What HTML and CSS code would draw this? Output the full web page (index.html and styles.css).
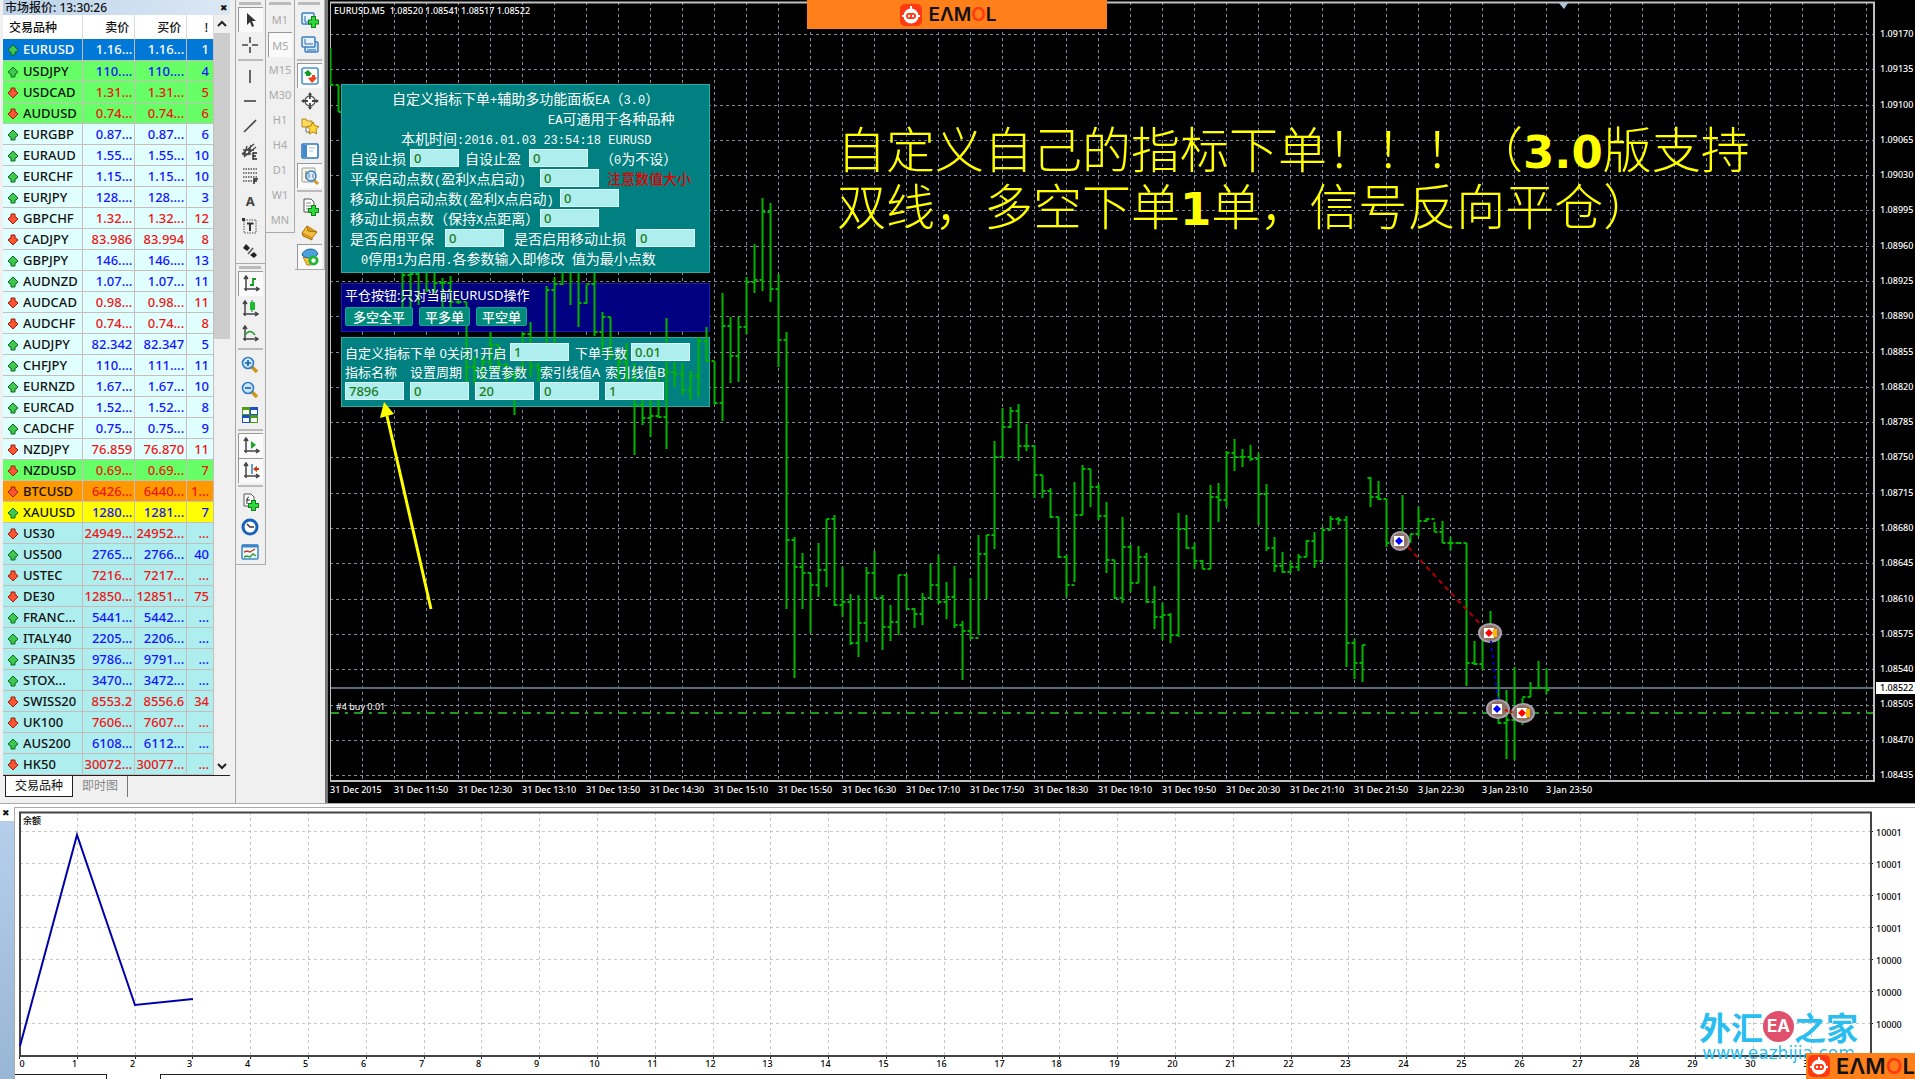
FILE: index.html
```html
<!DOCTYPE html>
<html lang="zh-CN">
<head>
    <meta charset="UTF-8">
    <meta name="viewport" content="width=device-width, initial-scale=1.0">
    <title>EURUSD.M5</title>
    <link rel="stylesheet" href="styles.css">
</head>
<body>
    <main class="workspace">
        <section class="market">
            <div class="market-title">
                <span>市场报价: 13:30:26</span>
                <button class="close-btn" aria-label="关闭">✖</button>
            </div>
            <div class="market-body">
                <table class="quotes">
                    <thead>
                        <tr><th class="sym">交易品种</th><th>卖价</th><th>买价</th><th class="spread">!</th></tr>
                    </thead>
                    <tbody id="quoteRows"></tbody>
                </table>
                <div class="scrollbar">
                    <svg width="16" height="18"><path d="M4 11l4-4 4 4" fill="none" stroke="#222" stroke-width="2"/></svg>
                    <div class="thumb"></div>
                    <svg width="16" height="18"><path d="M4 7l4 4 4-4" fill="none" stroke="#222" stroke-width="2"/></svg>
                </div>
            </div>
            <div class="market-tabs">
                <button class="tab active">交易品种</button>
                <button class="tab">即时图</button>
            </div>
        </section>

        <nav class="toolbars">
            <div class="tool-col">
                <div class="toolbar">
                    <button class="tool on" aria-label="光标"><svg viewBox="0 0 18 18"><path d="M5 2v12l3-3 2 5 2-1-2-5h4z" fill="#333"/></svg></button>
                    <button class="tool" aria-label="十字准线"><svg viewBox="0 0 18 18"><path d="M9 1v6M9 11v6M1 9h6M11 9h6" stroke="#444" stroke-width="1.6"/></svg></button>
                    <hr>
                    <button class="tool" aria-label="垂直线"><svg viewBox="0 0 18 18"><path d="M9 3v13" stroke="#444" stroke-width="1.6"/></svg></button>
                    <button class="tool" aria-label="水平线"><svg viewBox="0 0 18 18"><path d="M3 9h12" stroke="#444" stroke-width="1.6"/></svg></button>
                    <button class="tool" aria-label="趋势线"><svg viewBox="0 0 18 18"><path d="M3 15L15 3" stroke="#444" stroke-width="1.6"/></svg></button>
                    <button class="tool" aria-label="等距通道"><svg viewBox="0 0 18 18"><path d="M1 12L13 2M3 15L15 5M2 8h11M1 12h9M6 4l-3 10M10 3l-3 10" stroke="#444" stroke-width="1.3"/><path d="M16 11h-4v6h4M12 14h3" fill="none" stroke="#222" stroke-width="1.4"/></svg></button>
                    <button class="tool" aria-label="斐波纳契"><svg viewBox="0 0 18 18"><path d="M2 2h14M2 6h14M2 10h14M2 14h9" stroke="#555" stroke-width="1.4" stroke-dasharray="1.5 1"/><path d="M13 17v-5h4M13 14h3" fill="none" stroke="#222" stroke-width="1.4"/></svg></button>
                    <button class="tool letter">A</button>
                    <button class="tool" aria-label="文本标签"><svg viewBox="0 0 18 18"><path d="M3 3h12v13H3z" fill="none" stroke="#555" stroke-dasharray="1.5 1"/><path d="M6 6.500h6.500M9 6v8" stroke="#333" stroke-width="2"/><path d="M1 1h3v3H1z" fill="#333"/></svg></button>
                    <button class="tool" aria-label="箭头"><svg viewBox="0 0 18 18"><path d="M5 2l4 4-3 3-4-3zM13 10l3 3-3 3-4-3z" fill="#222"/><path d="M7 12l5-6" stroke="#555" stroke-width="1.500"/></svg></button>
                </div>
                <div class="toolbar">
                    <button class="tool on" aria-label="柱状图"><svg viewBox="0 0 18 18"><path d="M4 2v14M2 14h14M2 4l2-3 2 3M14 12l3 2-3 2" fill="none" stroke="#444" stroke-width="1.5"/><path d="M11 3v8M11 4h3M8 10h3" stroke="#129b22" stroke-width="1.800"/></svg></button>
                    <button class="tool" aria-label="阴阳烛"><svg viewBox="0 0 18 18"><path d="M4 2v14M2 14h14M2 4l2-3 2 3M14 12l3 2-3 2" fill="none" stroke="#444" stroke-width="1.5"/><path d="M11 0v12" stroke="#074"/><rect x="9" y="2" width="5" height="8" rx="1" fill="#1cba30"/></svg></button>
                    <button class="tool" aria-label="折线图"><svg viewBox="0 0 18 18"><path d="M4 2v14M2 14h14M2 4l2-3 2 3M14 12l3 2-3 2" fill="none" stroke="#444" stroke-width="1.5"/><path d="M4 10q5-7 10 0" fill="none" stroke="#239b32" stroke-width="1.6"/></svg></button>
                    <hr>
                    <button class="tool" aria-label="放大"><svg viewBox="0 0 18 18"><path d="M11 11l5 5" stroke="#c9971e" stroke-width="3.5"/><circle cx="7" cy="7" r="5.500" fill="#cbe8fb" stroke="#2f7cc4" stroke-width="1.6"/><path d="M4 7h6M7 4v6" stroke="#1b5ea6" stroke-width="1.6"/></svg></button>
                    <button class="tool" aria-label="缩小"><svg viewBox="0 0 18 18"><path d="M11 11l5 5" stroke="#c9971e" stroke-width="3.5"/><circle cx="7" cy="7" r="5.500" fill="#cbe8fb" stroke="#2f7cc4" stroke-width="1.6"/><path d="M4 7h6" stroke="#1b5ea6" stroke-width="1.6"/></svg></button>
                    <button class="tool" aria-label="平铺窗口"><svg viewBox="0 0 18 18"><path d="M1 1h8v8H1zM9 9h8v8H9z" fill="#4d9c14"/><path d="M9 1h8v8H9zM1 9h8v8H1z" fill="#1c4fc0"/><path d="M2 4h6v4H2zM10 4h6v4h-6zM2 12h6v4H2zM10 12h6v4h-6z" fill="#f4faff"/></svg></button>
                    <hr>
                    <button class="tool on" aria-label="自动滚动"><svg viewBox="0 0 18 18"><path d="M4 2v14M2 14h14M2 4l2-3 2 3M14 12l3 2-3 2" fill="none" stroke="#444" stroke-width="1.5"/><path d="M9 4v8l5-4z" fill="#18a52b"/></svg></button>
                    <button class="tool on" aria-label="图表平移"><svg viewBox="0 0 18 18"><path d="M4 2v14M2 14h14M2 4l2-3 2 3M14 12l3 2-3 2" fill="none" stroke="#444" stroke-width="1.5"/><path d="M10 2v10" stroke="#2880c0" stroke-width="1.500"/><path d="M11 7l4-3v2h2v2h-2v2z" fill="#cf3415"/></svg></button>
                    <hr>
                    <button class="tool" aria-label="技术指标"><svg viewBox="0 0 18 18"><path d="M3 1h7l3 3v9H3z" fill="#fff" stroke="#555"/><path d="M8 4q-2 0-2 3v4M5 7h4" fill="none" stroke="#333"/><path d="M12.500 7v11M7 12.500h11" stroke="#13801c" stroke-width="5"/><path d="M12.500 8v9M8 12.500h9" stroke="#2cd83a" stroke-width="3"/></svg></button>
                    <button class="tool" aria-label="时段"><svg viewBox="0 0 18 18"><circle cx="9" cy="9" r="7" fill="#fff" stroke="#1763b8" stroke-width="3"/><path d="M6 6l3 3h4" fill="none" stroke="#333" stroke-width="1.4"/></svg></button>
                    <button class="tool" aria-label="模板"><svg viewBox="0 0 18 18"><rect x="1" y="2" width="16" height="14" rx="1" fill="#eef8ff" stroke="#3c86c8" stroke-width="1.5"/><path d="M1 3h16" stroke="#3c86c8" stroke-width="3"/><path d="M3 9l3-1 3 1 5-3" fill="none" stroke="#c8401e" stroke-width="1.4"/><path d="M3 14l3-1 3 1 3-3 3 2" fill="none" stroke="#2d9a35" stroke-width="1.400"/></svg></button>
                </div>
            </div>
            <div class="tool-col">
                <div class="toolbar periods">
                    <button class="tool">M1</button>
                    <button class="tool on">M5</button>
                    <button class="tool">M15</button>
                    <button class="tool">M30</button>
                    <button class="tool">H1</button>
                    <button class="tool">H4</button>
                    <button class="tool">D1</button>
                    <button class="tool">W1</button>
                    <button class="tool">MN</button>
                </div>
            </div>
            <div class="tool-col">
                <div class="toolbar">
                    <button class="tool" aria-label="新图表"><svg viewBox="0 0 18 18"><rect x="1" y="2" width="12" height="11" rx="1" fill="#e6f3ff" stroke="#3c7fc0" stroke-width="1.5"/><path d="M4 5v6h7" fill="none" stroke="#2a69a8"/><path d="M12.500 5v12M7 11h11" stroke="#13801c" stroke-width="5"/><path d="M12.500 6v10M8 11h9" stroke="#2cd83a" stroke-width="3"/></svg></button>
                    <button class="tool" aria-label="窗口"><svg viewBox="0 0 18 18"><rect x="4" y="6" width="13" height="10" rx="1" fill="#cfe6fa" stroke="#3c7fc0" stroke-width="1.5"/><rect x="1" y="1" width="13" height="10" rx="1" fill="#e6f3ff" stroke="#3c7fc0" stroke-width="1.5"/><path d="M4 3v5h8M6 14h9" fill="none" stroke="#2a69a8"/></svg></button>
                    <hr>
                    <button class="tool on" aria-label="市场报价"><svg viewBox="0 0 18 18"><rect x="1" y="1" width="16" height="16" rx="2" fill="#fff" stroke="#4b92d2" stroke-width="1.600"/><path d="M7 3l4 4-2 1v1H5V7L3 6z" fill="#119b20"/><path d="M11 16l5-5-2-1V8h-3v2l-4 1z" fill="#f0451c"/></svg></button>
                    <button class="tool" aria-label="数据窗口"><svg viewBox="0 0 18 18"><circle cx="9" cy="9" r="5" fill="#fff" stroke="#555" stroke-width="1.4"/><path d="M9 1v6M9 11v6M1 9h6M11 9h6" stroke="#444" stroke-width="1.8"/><path d="M7 3l2-3 2 3zM7 15l2 3 2-3zM3 7L0 9l3 2zM15 7l3 2-3 2z" fill="#444"/></svg></button>
                    <button class="tool" aria-label="导航"><svg viewBox="0 0 18 18"><path d="M1 2h4l1 2h5v6H1z" fill="#fbdc5c" stroke="#b8891a"/><path d="M5 10v5h4" fill="none" stroke="#777"/><path d="M12 5l2 4 4 .5-3 3 .7 4.500-3.700-2-4 2 1-4.500-3-3 4-.5z" fill="#ffd93b" stroke="#b07f10"/></svg></button>
                    <button class="tool" aria-label="终端"><svg viewBox="0 0 18 18"><rect x="1" y="2" width="16" height="14" rx="1" fill="#fff" stroke="#2f78c2" stroke-width="1.600"/><path d="M2 3h4v12H2z" fill="#3f88ce"/><path d="M8 6h6M8 9h4" stroke="#9cc3e5"/></svg></button>
                    <button class="tool on" aria-label="策略测试"><svg viewBox="0 0 18 18"><rect x="1" y="1" width="13" height="14" rx="1" fill="#fff3d8" stroke="#8a9fb0"/><path d="M13 13l4 4" stroke="#d39a20" stroke-width="3"/><circle cx="10" cy="9" r="5" fill="#d5ecfb" stroke="#3a80be" stroke-width="1.5"/><path d="M8 6v5M12 7v4M5 4v8" stroke="#5b7f9c"/></svg></button>
                    <hr>
                    <button class="tool" aria-label="新订单"><svg viewBox="0 0 18 18"><path d="M3 1h7l3 3v10H3z" fill="#fff" stroke="#555"/><path d="M5 5h5M5 8h5M5 11h3" stroke="#888"/><path d="M12.500 7v11M7 12.500h11" stroke="#13801c" stroke-width="5"/><path d="M12.500 8v9M8 12.500h9" stroke="#2cd83a" stroke-width="3"/></svg></button>
                    <button class="tool" aria-label="编辑器"><svg viewBox="0 0 18 18"><path d="M6 3l10 6-5 6-10-5z" fill="#f3bd3e" stroke="#a9710c"/><path d="M6 3l1 5 9 1M1 10l1 3 9 4v-2" fill="#dd9c1c" stroke="#a9710c"/></svg></button>
                    <button class="tool on" aria-label="自动交易"><svg viewBox="0 0 18 18"><path d="M2 9h12l-4 8H6z" fill="#f2c63a" stroke="#b3861a"/><path d="M1 7q1-5 8-6 6 0 8 5-2 4-8 4-6 0-8-3z" fill="#4ba1dc" stroke="#2468a6"/><circle cx="12.500" cy="12.500" r="5" fill="#1fb432"/><circle cx="12.500" cy="12.500" r="2.200" fill="#fff"/></svg></button>
                </div>
            </div>
        </nav>

        <section class="chart">
            <div class="chart-main">
                <div class="plot" id="plot">
                    <svg class="layer" id="gridLayer"></svg>

                    <div class="panels">
                        <form class="panel panel-main">
                            <div class="row text title">自定义指标下单<span class="mono">+</span>辅助多功能面板<span class="mono">EA</span>（<span class="mono">3.0</span>）</div>
                            <div class="row text note"><span class="mono">EA</span>可通用于各种品种</div>
                            <div class="row text clock">本机时间<span class="mono">:2016.01.03 23:54:18 EURUSD</span></div>
                            <div class="row">
                                <label class="w60" for="sl">自设止损</label><input class="short" id="sl" value="0">
                                <label class="w64 indent" for="tp">自设止盈</label><input id="tp" value="0">
                                <span class="hint">（<span class="mono">0</span>为不设）</span>
                            </div>
                            <div class="row">
                                <label class="w190" for="be">平保启动点数<span class="mono">(</span>盈利<span class="mono">X</span>点启动<span class="mono">)</span></label><input id="be" value="0">
                                <span class="warn">注意数值大小</span>
                            </div>
                            <div class="row">
                                <label class="w210" for="tsStart">移动止损启动点数<span class="mono">(</span>盈利<span class="mono">X</span>点启动<span class="mono">)</span></label><input id="tsStart" value="0">
                            </div>
                            <div class="row">
                                <label class="w190" for="ts">移动止损点数（保持<span class="mono">X</span>点距离）</label><input id="ts" value="0">
                            </div>
                            <div class="row">
                                <label class="w95" for="beOn">是否启用平保</label><input id="beOn" value="0">
                                <label class="w120 indent-lg" for="tsOn">是否启用移动止损</label><input id="tsOn" value="0">
                            </div>
                            <div class="row text foot"><span class="mono">0</span>停用<span class="mono">1</span>为启用<span class="mono">.</span>各参数输入即修改<span class="mono"> </span>值为最小点数</div>
                        </form>

                        <div class="panel panel-close">
                            <div class="row above">平仓按钮:只对当前EURUSD操作</div>
                            <div class="btns above">
                                <button>多空全平</button>
                                <button>平多单</button>
                                <button>平空单</button>
                            </div>
                        </div>

                        <form class="panel panel-order">
                            <div class="row above">
                                <label class="w165" for="on">自定义指标下单 0关闭1开启</label><input id="on" value="1">
                                <label class="w56 indent" for="lots">下单手数</label><input id="lots" value="0.01">
                            </div>
                            <div class="fields above">
                                <label>指标名称<input value="7896"></label>
                                <label>设置周期<input value="0"></label>
                                <label>设置参数<input value="20"></label>
                                <label>索引线值A<input value="0"></label>
                                <label>索引线值B<input value="1"></label>
                            </div>
                        </form>
                    </div>

                    <svg class="layer bars" id="barLayer"></svg>

                    <div class="symbol-info">EURUSD.M5&nbsp; 1.08520 1.08541 1.08517 1.08522</div>
                    <h1 class="headline">自定义自己的指标下单！！！（<b>3.0</b>版支持<br>双线，多空下单<b>1</b>单，信号反向平仓）</h1>
                    <div class="order-tag">#4 buy 0.01</div>
                </div>
                <div class="prices" id="prices">
                    <span class="price-now">1.08522</span>
                </div>
            </div>
            <div class="times" id="times"></div>
        </section>
    </main>

    <section class="report">
        <div class="report-side"><button class="close-btn" aria-label="关闭">✖</button></div>
        <div class="report-main">
            <svg class="balance" id="balance"></svg>
            <div class="report-tabs"><i></i><i></i><i></i></div>
        </div>
        <div class="watermark">
            <div class="wm-name">外汇<span class="wm-ea">EA</span>之家</div>
            <div class="wm-url">www.eazhijia.com</div>
        </div>
    </section>

    <div class="banner banner-top">
        <svg class="robot" viewBox="0 0 22 22"><rect width="22" height="22" rx="5" fill="#ff3a12"/><path d="M11 2v4M2 12h3M17 12h3" stroke="#fff" stroke-width="2"/><circle cx="11" cy="12" r="7.500" fill="#fff"/><rect x="6" y="9" width="10" height="6" rx="3" fill="#ff3a12"/><circle cx="9" cy="12" r="1.200" fill="#fff"/><circle cx="13" cy="12" r="1.200" fill="#fff"/></svg>
        <span>EΛM<em>O</em>L</span>
    </div>
    <div class="banner banner-corner">
        <svg class="robot" viewBox="0 0 22 22"><rect width="22" height="22" rx="5" fill="#ff3a12"/><path d="M11 2v4M2 12h3M17 12h3" stroke="#fff" stroke-width="2"/><circle cx="11" cy="12" r="7.500" fill="#fff"/><rect x="6" y="9" width="10" height="6" rx="3" fill="#ff3a12"/><circle cx="9" cy="12" r="1.200" fill="#fff"/><circle cx="13" cy="12" r="1.200" fill="#fff"/></svg>
        <span>EΛM<em>O</em>L</span>
    </div>

    <script src="script.js"></script>
</body>
</html>
```

FILE: styles.css
```css
* {
    box-sizing: border-box;
    margin: 0;
    padding: 0;
}

body {
    height: 100vh;
    display: flex;
    flex-direction: column;
    overflow: hidden;
    background: #f0f0f0;
    color: #111;
    font-family: "Noto Sans", "Noto Sans CJK SC", sans-serif;
    font-size: 13px;
}

button, input {
    font: inherit;
    color: inherit;
    border: none;
    background: none;
}

.workspace {
    flex: 1;
    min-height: 0;
    display: flex;
}

/* Market watch */
.market {
    width: 236px;
    padding-left: 3px;
    padding-right: 5px;
    border-right: 1px solid #aaa;
    display: flex;
    flex-direction: column;
}

.market-title {
    height: 15px;
    display: flex;
    justify-content: space-between;
    align-items: center;
    padding: 0 2px;
    line-height: 14px;
    font-size: 12px;
    font-weight: 500;
    background: linear-gradient(90deg, #bcd3ea, #dce8f4);
}

.close-btn {
    font-size: 9px;
    line-height: 12px;
}

.market-body {
    display: flex;
    border-bottom: 1px solid #222;
}

.quotes {
    flex: 1;
    border-collapse: collapse;
    table-layout: fixed;
    background: #fff;
    font-weight: 500;
}

.quotes th {
    height: 24px;
    font-weight: 500;
    font-size: 12px;
    text-align: right;
    padding-right: 5px;
    width: 52px;
    border-right: 1px solid #ddd;
}

.quotes th.sym {
    width: 80px;
    text-align: left;
    padding-left: 6px;
}

.quotes th.spread {
    width: 27px;
}

.quotes td {
    height: 21px;
    line-height: 20px;
    padding-right: 2px;
    text-align: right;
    white-space: nowrap;
    overflow: hidden;
    border-right: 1px solid #c9bcbc;
    border-bottom: 1px solid #c9bcbc;
}

.quotes td.sym {
    text-align: left;
    padding-left: 4px;
    color: #111;
}

.quotes td svg {
    width: 12px;
    height: 12px;
    margin-right: 4px;
    vertical-align: -2px;
}

.quotes td:last-child {
    padding-right: 4px;
}

.pale { background: #e0ffff; }
.aqua { background: #afeeee; }
.green { background: #66ff66; }
.orange { background: #ff9900; }
.yellow { background: #ffff00; }
.selected { background: #0078d7; }

.up td { color: #1414ff; }
.down td { color: #f01414; }
.quotes .selected td { color: #fff; }

.scrollbar {
    width: 16px;
    display: flex;
    flex-direction: column;
    background: #f0f0f0;
}

.scrollbar svg:last-child {
    margin-top: auto;
}

.thumb {
    height: 306px;
    background: #cdcdcd;
}

.market-tabs {
    display: flex;
    font-size: 12px;
    padding-left: 2px;
}

.tab {
    height: 21px;
    padding: 0 9px;
    line-height: 20px;
    color: #888;
    border-right: 1px solid #777;
}

.tab.active {
    color: #111;
    background: #fff;
    border: 1px solid #222;
    border-top: none;
}

/* Toolbars */
.toolbars {
    display: flex;
    width: 89px;
}

.tool-col {
    flex: 1;
}

.toolbar {
    padding: 7px 2px 0;
    border-right: 1px solid #aaa;
    border-bottom: 1px solid #aaa;
    background: linear-gradient(#bbb, #bbb) 3px 2px / 22px 3px no-repeat #f0f0f0;
}

.toolbar hr {
    border: none;
    border-top: 2px solid #bbb;
    margin: 2px 0;
}

.tool {
    display: flex;
    width: 100%;
    height: 25px;
    align-items: center;
    justify-content: center;
}

.tool svg {
    width: 18px;
    height: 18px;
}

.tool.on {
    background: #fafafa;
    border-left: 1px solid #999;
    border-top: 1px solid #999;
}

.letter {
    font-weight: bold;
    color: #444;
}

.periods .tool {
    font-size: 11px;
    color: #aaa;
}

/* Price chart */
.chart {
    flex: 1;
    min-width: 0;
    display: flex;
    flex-direction: column;
    background: #000;
    color: #fff;
    border-left: 3px solid #777;
    padding-left: 2px;
}

.chart-main {
    flex: 1;
    display: flex;
    min-height: 0;
}

.plot {
    flex: 1;
    position: relative;
    overflow: hidden;
}

.layer {
    position: absolute;
    left: 0;
    top: 0;
    width: 100%;
    height: 100%;
}

.bars {
    z-index: 1;
    pointer-events: none;
}

.symbol-info {
    position: absolute;
    left: 4px;
    top: 4px;
    font-size: 9px;
    font-weight: 500;
    line-height: 13px;
}

.order-tag {
    position: absolute;
    left: 6px;
    top: 701px;
    font-size: 9px;
    line-height: 12px;
}

.headline {
    position: absolute;
    left: 507px;
    top: 118px;
    color: #ffff00;
    font-family: "Noto Sans CJK SC", sans-serif;
    font-size: 49px;
    font-weight: 300;
    line-height: 57px;
    white-space: nowrap;
}

.headline b {
    font-family: "DejaVu Sans", sans-serif;
    font-size: 45px;
    font-weight: bold;
    line-height: 1;
}

.prices {
    position: relative;
    width: 40px;
    padding: 28px 0 1px 5px;
    display: flex;
    flex-direction: column;
    justify-content: space-between;
    font-size: 9px;
    font-weight: 500;
    line-height: 12px;
}

.price-now {
    position: absolute;
    left: 1px;
    right: 0;
    top: 682px;
    padding-left: 4px;
    background: #fff;
    color: #000;
}

.times {
    height: 21px;
    display: flex;
    font-size: 9px;
    font-weight: 500;
    line-height: 16px;
    overflow: hidden;
}

.times span {
    flex: 0 0 64px;
    white-space: nowrap;
}

/* Expert advisor panels, laid over the chart */
.panels {
    position: absolute;
    left: 11px;
    top: 84px;
    width: 369px;
    display: flex;
    flex-direction: column;
}

.panel {
    padding-left: 3px;
    border: 1px solid #20b2aa;
    background: #008080;
}

.panel-main {
    position: relative;
    z-index: 2;
    height: 189px;
    padding: 3px 0 0 8px;
    margin-bottom: 10px;
    font-family: "Noto Sans CJK SC", sans-serif;
}

.panel-close {
    height: 49px;
    margin-bottom: 5px;
    background: #000080;
    border-color: #1c1cb4;
}

.panel-order {
    height: 70px;
    padding-top: 4px;
}

.above {
    position: relative;
    z-index: 2;
}

.row {
    display: flex;
    height: 20px;
    align-items: center;
    white-space: nowrap;
}

.panel-main .row {
    font-size: 14px;
}

.panel-main .text {
    display: block;
    line-height: 20px;
}

.mono {
    font-family: "Liberation Mono", monospace;
    font-size: 12px;
    white-space: pre;
}

.title { padding-left: 42px; }
.note { padding-left: 198px; }
.clock { padding-left: 51px; }
.foot { padding-left: 11px; }
.hint { padding-left: 12px; }

.warn {
    padding-left: 8px;
    color: #e00000;
    font-weight: 500;
}

.panel input {
    width: 59px;
    height: 18px;
    padding-left: 3px;
    background: #afeeee;
    border: 1px solid #e0ffff;
    color: #1a7a1a;
    font-family: "Noto Sans", sans-serif;
    font-size: 13px;
    font-weight: 500;
    line-height: 16px;
}

.panel .short { width: 49px; }

.indent { margin-left: 6px; }
.indent-lg { margin-left: 10px; }
.w56 { width: 56px; }
.w60 { width: 60px; }
.w64 { width: 64px; }
.w95 { width: 95px; }
.w120 { width: 122px; }
.w165 { width: 165px; }
.w190 { width: 190px; }
.w210 { width: 210px; }

.btns {
    display: flex;
    gap: 6px;
    margin-top: 3px;
}

.btns button {
    height: 19px;
    padding: 0 5px;
    background: #008b7a;
    border: 1px solid #14a39a;
    border-radius: 2px;
    font-size: 13px;
    font-weight: 500;
    line-height: 16px;
}

.btns button:first-child {
    padding: 0 7px;
}

.fields {
    display: flex;
    gap: 6px;
}

.fields label {
    width: 59px;
    line-height: 20px;
    white-space: nowrap;
}

.fields input {
    display: block;
}

/* Tester report */
.report {
    position: relative;
    height: 276px;
    display: flex;
    padding-top: 3px;
    background: #fff;
    border-top: 1px solid #aaa;
}

.report-side {
    width: 14px;
    background: linear-gradient(#b5cfeb, #98b4d4) 0 14px no-repeat;
}

.report-side .close-btn {
    display: block;
    padding-left: 2px;
}

.report-main {
    flex: 1;
    border: 1px solid #aaa;
    border-right: none;
    border-bottom: none;
    display: flex;
    flex-direction: column;
}

.balance {
    flex: 1;
    width: 100%;
    min-height: 0;
    font-size: 9px;
    font-weight: 500;
}

.report-tabs {
    height: 5px;
    display: flex;
}

.report-tabs i {
    width: 92px;
    border-top: 1px solid #222;
    border-right: 1px solid #222;
}

.report-tabs i:nth-child(2) {
    width: 54px;
    border-top: none;
}

.report-tabs i:last-child {
    flex: 1;
}

.watermark {
    position: absolute;
    right: 57px;
    bottom: 16px;
    color: #2abdf0;
    text-align: center;
}

.wm-name {
    display: flex;
    align-items: center;
    justify-content: center;
    font-family: "Noto Sans CJK SC", sans-serif;
    font-size: 32px;
    font-weight: bold;
    line-height: 34px;
}

.wm-ea {
    width: 31px;
    height: 31px;
    border-radius: 50%;
    background: #e0506c;
    color: #fff;
    font-family: Inter, sans-serif;
    font-size: 17px;
    line-height: 31px;
}

.wm-url {
    font-family: "DejaVu Sans", sans-serif;
    font-size: 17px;
    line-height: 20px;
}

/* Brand banners */
.banner {
    position: absolute;
    z-index: 5;
    display: flex;
    align-items: center;
    justify-content: center;
    gap: 6px;
    background: #ff7f1a;
    color: #111;
    font-family: Inter, sans-serif;
    font-weight: 600;
    white-space: nowrap;
}

.banner em {
    color: #ff3a12;
    font-style: normal;
}

.robot {
    width: 22px;
    height: 22px;
}

.banner-top {
    left: 807px;
    top: 0;
    width: 300px;
    height: 29px;
    padding-right: 17px;
    font-size: 19px;
}

.banner-corner {
    right: 0;
    bottom: 0;
    height: 26px;
    padding-left: 2px;
    font-size: 22px;
}
```

FILE: script.js
```js
// symbol, bid, ask, spread, direction, row colour
const quotes = [
    ['EURUSD', '1.16...', '1.16...', '1', 'up', 'selected'],
    ['USDJPY', '110....', '110....', '4', 'up', 'green'],
    ['USDCAD', '1.31...', '1.31...', '5', 'down', 'green'],
    ['AUDUSD', '0.74...', '0.74...', '6', 'down', 'green'],
    ['EURGBP', '0.87...', '0.87...', '6', 'up', 'pale'],
    ['EURAUD', '1.55...', '1.55...', '10', 'up', 'pale'],
    ['EURCHF', '1.15...', '1.15...', '10', 'up', 'pale'],
    ['EURJPY', '128....', '128....', '3', 'up', 'pale'],
    ['GBPCHF', '1.32...', '1.32...', '12', 'down', 'pale'],
    ['CADJPY', '83.986', '83.994', '8', 'down', 'pale'],
    ['GBPJPY', '146....', '146....', '13', 'up', 'pale'],
    ['AUDNZD', '1.07...', '1.07...', '11', 'up', 'pale'],
    ['AUDCAD', '0.98...', '0.98...', '11', 'down', 'pale'],
    ['AUDCHF', '0.74...', '0.74...', '8', 'down', 'pale'],
    ['AUDJPY', '82.342', '82.347', '5', 'up', 'pale'],
    ['CHFJPY', '110....', '111....', '11', 'up', 'pale'],
    ['EURNZD', '1.67...', '1.67...', '10', 'up', 'pale'],
    ['EURCAD', '1.52...', '1.52...', '8', 'up', 'pale'],
    ['CADCHF', '0.75...', '0.75...', '9', 'up', 'pale'],
    ['NZDJPY', '76.859', '76.870', '11', 'down', 'pale'],
    ['NZDUSD', '0.69...', '0.69...', '7', 'down', 'green'],
    ['BTCUSD', '6426...', '6440...', '1...', 'down', 'orange'],
    ['XAUUSD', '1280...', '1281...', '7', 'up', 'yellow'],
    ['US30', '24949...', '24952...', '...', 'down', 'aqua'],
    ['US500', '2765...', '2766...', '40', 'up', 'aqua'],
    ['USTEC', '7216...', '7217...', '...', 'down', 'aqua'],
    ['DE30', '12850...', '12851...', '75', 'down', 'aqua'],
    ['FRANC...', '5441...', '5442...', '...', 'up', 'aqua'],
    ['ITALY40', '2205...', '2206...', '...', 'up', 'aqua'],
    ['SPAIN35', '9786...', '9791...', '...', 'up', 'aqua'],
    ['STOX...', '3470...', '3472...', '...', 'up', 'aqua'],
    ['SWISS20', '8553.2', '8556.6', '34', 'down', 'aqua'],
    ['UK100', '7606...', '7607...', '...', 'down', 'aqua'],
    ['AUS200', '6108...', '6112...', '...', 'up', 'aqua'],
    ['HK50', '30072...', '30077...', '...', 'down', 'aqua']
];

const arrows = {
    up: '<svg viewBox="0 0 12 12"><path d="M6 1l5 5-2 2H8v3H4V8H3L1 6z" fill="#3fc850" stroke="#0b6b18"/></svg>',
    down: '<svg viewBox="0 0 12 12"><path d="M6 11L1 6l2-2h1V1h4v3h1l2 2z" fill="#ff5533" stroke="#9c1c08"/></svg>'
};

document.getElementById('quoteRows').innerHTML = quotes.map(([sym, bid, ask, spread, dir, color]) =>
    `<tr class="${dir} ${color}"><td class="sym">${arrows[dir]}${sym}</td><td>${bid}</td><td>${ask}</td><td>${spread}</td></tr>`
).join('');

// Each bar is [high, low, close]; a bar opens at the previous close
const BAR_STEP = 8;
const segments = [
    { start: 0, open: 50, bars: [[48, 86, 85], [85, 112, 112]] },
    { start: 9, open: 270, bars: [
        [240, 307, 275], [255, 307, 274], [262, 305, 269], [255, 292, 290], [266, 293, 283], [278, 307, 283],
        [276, 307, 302], [300, 304, 302], [302, 387, 367], [357, 385, 370], [355, 380, 362], [332, 372, 345],
        [345, 372, 365], [363, 383, 375], [371, 415, 372], [332, 373, 334], [322, 377, 366], [363, 382, 370],
        [286, 354, 290], [277, 343, 284], [240, 285, 272], [245, 305, 272], [272, 327, 303], [285, 304, 284],
        [269, 336, 332], [312, 353, 317], [317, 360, 355], [355, 380, 362], [343, 383, 378], [363, 455, 405],
        [385, 425, 418], [364, 437, 416], [370, 418, 417], [318, 449, 372], [362, 387, 374], [363, 395, 390],
        [371, 400, 376], [337, 397, 341], [327, 362, 361],
        [361, 405, 403], [293, 421, 326], [317, 383, 356], [317, 382, 327], [277, 334, 282], [244, 293, 280],
        [198, 291, 212], [203, 302, 289], [274, 367, 340], [332, 609, 540], [537, 678, 567], [553, 609, 573],
        [573, 633, 585], [543, 597, 570], [519, 587, 519], [515, 606, 605], [567, 617, 602], [594, 645, 643],
        [595, 657, 623], [567, 642, 573], [551, 599, 598], [595, 650, 627], [605, 641, 622], [575, 635, 575],
        [574, 609, 609], [608, 628, 614], [593, 625, 598], [564, 599, 585], [555, 604, 602], [582, 619, 597],
        [566, 628, 625], [621, 680, 631], [578, 639, 638], [535, 635, 554], [535, 599, 535], [441, 549, 457],
        [408, 458, 427], [407, 428, 411], [404, 461, 446], [424, 451, 446], [445, 498, 475], [475, 498, 491],
        [488, 518, 517], [517, 558, 557], [555, 597, 585], [482, 582, 515], [465, 515, 469], [469, 507, 487],
        [484, 520, 516], [502, 573, 560], [560, 599, 598], [517, 603, 547], [545, 592, 583], [546, 583, 557],
        [553, 603, 602], [586, 629, 617], [603, 640, 615], [613, 643, 635], [513, 637, 529], [515, 549, 548],
        [543, 569, 561], [560, 569, 569], [485, 569, 497], [483, 522, 500], [451, 507, 453], [439, 471, 457],
        [449, 467, 457], [445, 461, 459], [453, 525, 494], [484, 551, 548], [537, 572, 566], [552, 573, 572],
        [561, 573, 567], [554, 571, 557], [540, 557, 541], [532, 568, 561], [527, 560, 530], [516, 530, 519],
        [517, 525, 520], [516, 667, 643], [639, 679, 663], [645, 682, 645]
    ] },
    { start: 130, open: 478, bars: [
        [477, 507, 497], [481, 500, 499], [499, 547, 543], [533, 543, 541], [495, 543, 541], [534, 543, 534],
        [507, 536, 521], [518, 522, 519], [522, 532, 532], [521, 543, 543], [537, 550, 543], [542, 544, 543],
        [543, 686, 663], [641, 665, 664], [627, 670, 629], [611, 640, 636], [636, 724, 723], [690, 759, 720],
        [667, 760, 712], [698, 725, 697], [682, 697, 688], [661, 688, 688], [668, 694, 690]
    ] }
];

const line = (x1, y1, x2, y2, attrs) =>
    `<line x1="${x1}" y1="${y1}" x2="${x2}" y2="${y2}" ${attrs}/>`;

function drawGrid(w, h) {
    const grid = 'stroke="#7c8a99" stroke-dasharray="3 3"';
    const bottom = h - 1;
    let out = '';
    for (let x = 32; x < w; x += 32) {
        out += line(x + 0.5, 2, x + 0.5, bottom, grid);
    }
    for (let i = 0; i < 22; i++) {
        const y = Math.round(34 + i * 35.29) + 0.5;
        out += line(0, y, w, y, grid);
    }
    out += line(0, 688, w, 688, 'stroke="#5c6875" stroke-width="2"');
    out += line(0, 713, w, 713, 'stroke="#1f9a1f" stroke-width="2" stroke-dasharray="9 6 3 6"');
    out += `<path d="M0 2.5H${w - 1}V${bottom}H0z" fill="none" stroke="#c0c0c0" stroke-width="2"/>`;
    out += '<path d="M1229 3h9l-4 6z" fill="#b0c4de"/>';
    document.getElementById('gridLayer').innerHTML = out;
}

function drawMarker(x, y, rx, color) {
    const bar = color === 'red' ? `<path d="M${x + 3} ${y - 4}h4v8h-4z" fill="#ffb400"/>` : '';
    return `<ellipse cx="${x}" cy="${y}" rx="${rx}" ry="9" fill="#8f7464" stroke="#a99fae" stroke-width="2"/>
        <path d="M${x - 6} ${y - 5}h10v10h-10z" fill="#fff"/>${bar}
        <path d="M${x - 1} ${y - 4}l4 4-4 4-4-4z" fill="${color}"/>`;
}

function drawBars() {
    let path = '';
    segments.forEach(({ start, open, bars }) => {
        bars.forEach(([high, low, close], i) => {
            const x = (start + i) * BAR_STEP + 0.5;
            path += `M${x} ${high}V${low}M${x - 3} ${open}H${x}M${x} ${close}H${x + 3}`;
            open = close;
        });
    });
    const out = `<path d="${path}" fill="none" stroke="#00b400" stroke-width="2"/>` +
        drawMarker(1070, 541, 9, 'blue') +
        drawMarker(1160, 633, 11, 'red') +
        drawMarker(1168, 709, 11, 'blue') +
        drawMarker(1193, 713, 11, 'red') +
        line(1078, 547, 1152, 626, 'stroke="#b00000" stroke-width="2" stroke-dasharray="5 4"') +
        line(1161, 641, 1168, 702, 'stroke="#0000d0" stroke-width="2" stroke-dasharray="3 4"') +
        line(1175, 710, 1184, 713, 'stroke="#d00000" stroke-width="2" stroke-dasharray="3 2"') +
        line(101, 609, 57, 416, 'stroke="#ffff00" stroke-width="3"') +
        '<path d="M54 402L50 418L64 414z" fill="#ffff00"/>';
    document.getElementById('barLayer').innerHTML = out;
}

function drawBalance() {
    const svg = document.getElementById('balance');
    const right = svg.clientWidth - 44;
    const bottom = 248;
    const grid = 'stroke="#c8c8c8" stroke-dasharray="3 3"';
    let out = '';
    for (let i = 0; i < 32; i++) {
        const x = Math.round(4 + i * 57.8) + 0.5;
        if (x > right) break;
        if (i) out += line(x, 4, x, bottom, grid);
        out += line(x, bottom, x, bottom + 3, 'stroke="#222"');
        out += `<text x="${i ? x - 3 : 7}" y="${bottom + 11}" text-anchor="middle">${i}</text>`;
    }
    ['10001', '10001', '10001', '10001', '10000', '10000', '10000'].forEach((label, i) => {
        const y = 23.5 + i * 32;
        out += line(5, y, right, y, grid) + line(right, y, right + 2, y, 'stroke="#222"');
        out += `<text x="${right + 5}" y="${y + 4}">${label}</text>`;
    });
    out += `<path d="M5 4.5H${right}V${bottom}H5z" fill="none" stroke="#444" stroke-width="2"/>`;
    out += '<text x="8" y="16">余额</text>';
    out += '<polyline points="5,238 62,27 120,197 178,191" fill="none" stroke="#0000aa" stroke-width="2"/>';
    svg.innerHTML = out;
}

function drawAxes() {
    const prices = document.getElementById('prices');
    for (let i = 0; i < 22; i++) {
        const label = document.createElement('span');
        label.textContent = (1.0917 - i * 0.00035).toFixed(5);
        prices.append(label);
    }
    const times = ['31 Dec 2015'];
    for (let i = 1; i < 20; i++) {
        const minutes = 670 + i * 40;
        const day = i > 16 ? '3 Jan' : '31 Dec';
        times.push(`${day} ${Math.floor(minutes / 60)}:${String(minutes % 60).padStart(2, '0')}`);
    }
    document.getElementById('times').innerHTML = times.map(t => `<span>${t}</span>`).join('');
}

function draw() {
    const plot = document.getElementById('plot');
    drawGrid(plot.clientWidth, plot.clientHeight);
    drawBars();
    drawBalance();
}

drawAxes();
draw();
window.addEventListener('resize', draw);
```
